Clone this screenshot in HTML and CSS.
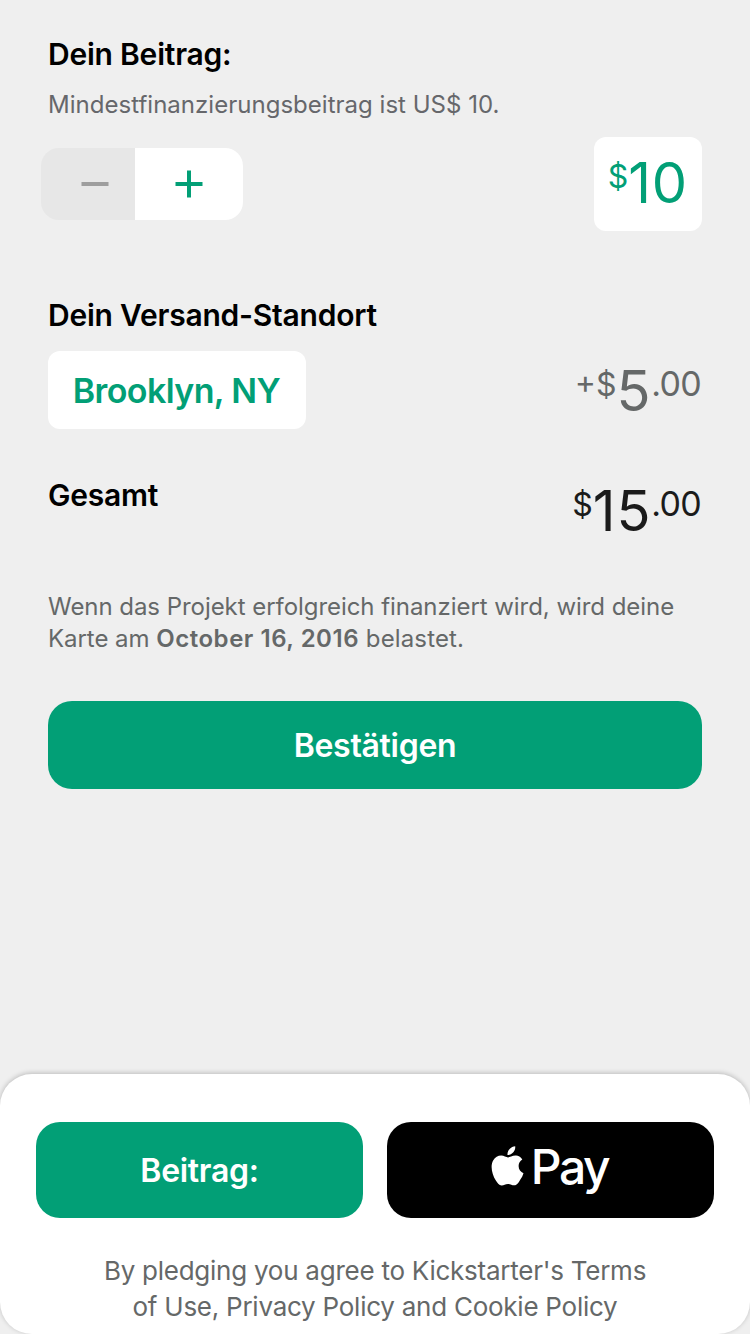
FILE: index.html
```html
<!DOCTYPE html>
<html lang="de">
<head>
<meta charset="utf-8">
<title>Dein Beitrag</title>
<link rel="stylesheet" href="styles.css">
</head>
<body>
<main class="pledge">
  <h2 class="heading">Dein Beitrag:</h2>
  <p class="hint">Mindestfinanzierungsbeitrag ist US$ 10.</p>
  <div class="row amount-row">
    <div class="stepper">
      <button class="minus" aria-label="Weniger"><svg width="28" height="28" viewBox="0 0 28 28"><path d="M0.5 14H27.5"/></svg></button>
      <button class="plus" aria-label="Mehr"><svg width="28" height="28" viewBox="0 0 28 28"><path d="M0.5 14H27.5M14 0.5V27.5"/></svg></button>
    </div>
    <div class="amount-box"><span class="money"><span class="currency">$</span><span class="big">10</span></span></div>
  </div>
  <h2 class="heading shipping-heading">Dein Versand-Standort</h2>
  <div class="row shipping-row">
    <button class="location">Brooklyn, NY</button>
    <span class="money gray"><span class="currency signed">+$</span><span class="big">5</span><span class="cents">.00</span></span>
  </div>
  <div class="row total-row">
    <h2 class="heading">Gesamt</h2>
    <span class="money dark"><span class="currency">$</span><span class="big">15</span><span class="cents">.00</span></span>
  </div>
  <p class="charge">Wenn das Projekt erfolgreich finanziert wird, wird deine<br>Karte am <b>October 16, 2016</b> <span class="charge-end">belastet.</span></p>
  <button class="confirm">Bestätigen</button>
</main>
<footer class="sheet">
  <div class="actions">
    <button class="action green">Beitrag:</button>
    <button class="action apple"><svg class="apple-icon" width="33" height="40" viewBox="0 0 33 40"><path d="M24.200 0.300C24.500 2.500 23.600 4.700 22.300 6.300C20.800 8 18.700 9.300 16.500 9.100C16.200 6.800 17.300 4.600 18.600 3.100C20 1.500 22.300.4 24.200.3ZM31.300 13.500C29 15 27.600 17 27.600 20C27.600 23.400 29.700 26 32.500 27.200C31.800 29.500 30.700 31.700 29.200 33.800C27.700 36.600 26 39.300 23.300 39.300C20.700 39.300 20 37.900 17 37.900C14 37.900 13.200 39.300 10.700 39.400C8.100 39.500 6.200 36.700 4.700 34.300C1.300 29 -1.200 20 2.300 14.300C4 11.400 7 9.600 10.200 9.600C12.900 9.600 15.200 11.400 17 11.400C18.700 11.400 21.500 9.400 25 9.600C27.200 9.700 29.800 10.800 31.300 13.500Z"/></svg><span>Pay</span></button>
  </div>
  <p class="terms">By pledging you agree to Kickstarter's Terms<br>of Use, Privacy Policy and Cookie Policy</p>
</footer>
</body>
</html>
```

FILE: styles.css
```css
* { box-sizing: border-box; }
body {
  margin: 0;
  height: 1334px;
  overflow: hidden;
  display: flex;
  flex-direction: column;
  justify-content: space-between;
  background: #efefef;
  color: #000;
  font-family: Inter, "Liberation Sans", sans-serif;
}
h2, p { margin: 0; }
button { border: 0; padding: 0; font-family: inherit; }
.pledge { padding: 34px 48px 0; display: flex; flex-direction: column; }
.heading { font-size: 30px; line-height: 40px; font-weight: 600; letter-spacing: -0.22px; white-space: nowrap; }
.hint { margin-top: 15px; font-size: 24px; line-height: 32px; color: #66676b; letter-spacing: 0.02px; white-space: nowrap; }
.row { display: flex; justify-content: space-between; }
.amount-row { margin-top: 16px; height: 94px; align-items: flex-start; }
.stepper { display: flex; width: 202px; height: 72px; margin: 11px 0 0 -7px; border-radius: 18px; overflow: hidden; }
.stepper button { display: flex; align-items: center; height: 72px; }
.stepper path { fill: none; stroke: currentColor; stroke-width: 4; }
.minus { width: 94px; padding-left: 40px; background: #e7e7e7; color: #9e9e9e; }
.plus { width: 108px; padding-left: 40px; background: #fff; color: #029f76; }
.amount-box { display: flex; justify-content: flex-end; width: 108px; height: 94px; padding: 14px 14px 0 0; border-radius: 12px; background: #fff; color: #029f76; }
.money { display: flex; align-items: flex-start; white-space: nowrap; }
.currency { padding-top: 1px; font-size: 32px; line-height: 50px; letter-spacing: 0; }
.cents { font-size: 34px; line-height: 50px; letter-spacing: -0.7px; }
.big { font-size: 56px; line-height: 64px; letter-spacing: 0.8px; }
.gray { color: #656868; }
.dark { color: #1b1b1b; }
.shipping-heading { margin-top: 64px; }
.shipping-row { margin-top: 16px; height: 78px; }
.location { width: 258px; border-radius: 12px; background: #fff; color: #029f76; font-size: 34px; font-weight: 600; letter-spacing: -0.6px; white-space: nowrap; padding-right: 1px; }
.shipping-row .money, .total-row .money { padding-right: 1px; }
.shipping-row .money { padding-top: 8px; }
.total-row { margin-top: 46px; height: 80px; }
.total-row .money { padding-top: 4px; }
.charge { margin-top: 36px; font-size: 24px; line-height: 32px; color: #656868; letter-spacing: -0.05px; white-space: nowrap; }
.charge b { font-weight: 600; letter-spacing: 0.54px; }
.charge-end { letter-spacing: 0.15px; }
.confirm { margin-top: 46px; height: 88px; border-radius: 24px; background: #029f76; color: #fff; font-size: 32px; font-weight: 600; letter-spacing: -0.3px; }
.sheet { height: 260px; padding: 48px 36px 0; border-radius: 32px; background: #fff; box-shadow: 0 -1px 5px rgba(0,0,0,.22); }
.actions { display: flex; gap: 24px; }
.action { width: 327px; height: 96px; border-radius: 24px; color: #fff; font-size: 32px; font-weight: 600; letter-spacing: -0.3px; }
.green { background: #029f76; }
.apple { display: flex; justify-content: center; align-items: center; gap: 7px; padding: 0 2px 7px 0; background: #000; font-size: 48px; font-weight: 500; letter-spacing: -2.4px; }
.apple-icon { fill: #fff; margin-bottom: 1px; }
.terms { margin-top: 35px; font-size: 26px; line-height: 36px; color: #656868; letter-spacing: -0.25px; text-align: center; white-space: nowrap; }
```
